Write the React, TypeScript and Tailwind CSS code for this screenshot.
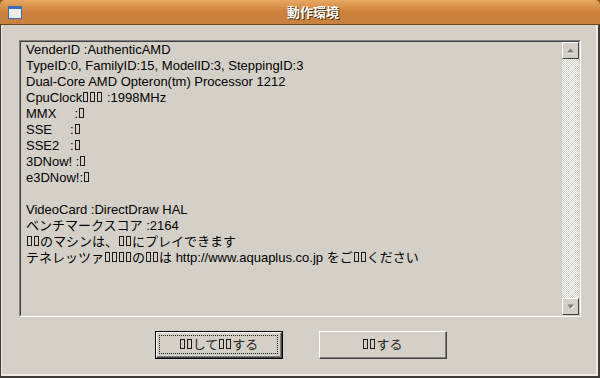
import React from 'react'

// missing-glyph box, as the original font renders it
function Tofu({ n = 1 }: { n?: number }) {
  return (
    <>
      {Array.from({ length: n }).map((_, i) => (
        <span key={i} className="inline-block w-[5px] h-[10px] border border-[#1a1a1a] ml-[1px] mr-[1px]" />
      ))}
    </>
  )
}

function ArrowBtn({ up }: { up?: boolean }) {
  return (
    <div className="w-[17px] h-[17px] bg-[#d4d0c8] border-t border-l border-white border-r border-b border-r-[#404040] border-b-[#404040] flex items-center justify-center">
      <svg width="9" height="6" viewBox="0 0 9 6">
        {up ? (
          <>
            <path d="M1 5 H8" stroke="#ffffff" strokeWidth="1" />
            <path d="M4.5 0.5 L8 4.5 H1 Z" fill="#808080" />
          </>
        ) : (
          <>
            <path d="M1.5 0.5 L8 0.5 L4.5 4.5 Z" fill="#808080" />
            <path d="M5 5 L8.5 1.5" stroke="#ffffff" strokeWidth="1" />
          </>
        )}
      </svg>
    </div>
  )
}

export default function App() {
  const font = "font-['Liberation_Sans','Noto_Sans_CJK_JP',sans-serif]"

  return (
    <div className={`w-[600px] h-[378px] bg-[#8a5a2c] ${font}`}>
      <div className="w-[600px] h-[378px] flex flex-col rounded-t-[5px] overflow-hidden">
        {/* title bar */}
        <div className="h-[25px] shrink-0 bg-linear-to-b from-[#e8a862] via-[#cb8039] to-[#c98241] border-b border-[#6a4418] flex items-center relative">
          <div className="absolute left-[8px] top-[6px] w-[14px] h-[13px] border border-[#3b6cc0] border-t-[3px] bg-[#ececec]" />
          <div className="flex-1 flex justify-center pl-[26px] pt-[1px]">
            <span className="text-white font-bold text-[13px] [text-shadow:1px_1px_0_#4a3010]">動作環境</span>
          </div>
        </div>

        {/* body */}
        <div className="flex-1 bg-[#d4d0c8] border-l border-[#3c3b37] border-r-2 border-b-2 border-r-[#3c3b37] border-b-[#3c3b37]">
          <div className="h-full border-l border-[#eeebe7] border-r-2 border-b-2 border-r-[#eeebe7] border-b-[#eeebe7] pt-[15px] pl-[17px]">
            <div className="w-[562px] h-[277px] border-t border-l border-[#808080] border-r border-b border-r-white border-b-white">
              <div className="h-full border-t border-l border-[#404040] border-r border-b border-r-[#d4d0c8] border-b-[#d4d0c8] flex">
                <div className="flex-1 pl-[5px] text-[13px] leading-[16px] text-black whitespace-pre">
                  <div>VenderID :AuthenticAMD</div>
                  <div>TypeID:0, FamilyID:15, ModelID:3, SteppingID:3</div>
                  <div>Dual-Core AMD Opteron(tm) Processor 1212</div>
                  <div>CpuClock<Tofu n={3} /> :1998MHz</div>
                  <div>MMX     :<Tofu /></div>
                  <div>SSE     :<Tofu /></div>
                  <div>SSE2   :<Tofu /></div>
                  <div>3DNow! :<Tofu /></div>
                  <div>e3DNow!:<Tofu /></div>
                  <div>&nbsp;</div>
                  <div>VideoCard :DirectDraw HAL</div>
                  <div>ベンチマークスコア :2164</div>
                  <div><Tofu n={2} />のマシンは、<Tofu n={2} />にプレイできます</div>
                  <div>テネレッツァ<Tofu n={4} />の<Tofu n={2} />は http://www.aquaplus.co.jp をご<Tofu n={2} />ください</div>
                </div>
                {/* scrollbar */}
                <div className="w-[17px] flex flex-col">
                  <ArrowBtn up />
                  <div className="flex-1 bg-[repeating-conic-gradient(#ffffff_0%_25%,#d4d0c8_0%_50%)] bg-size-[2px_2px]" />
                  <ArrowBtn />
                </div>
              </div>
            </div>

            {/* buttons */}
            <div className="flex mt-[14px] pl-[136px] gap-[36px] text-[13px] text-[#222]">
              <div className="w-[128px] h-[28px] border border-black">
                <div className="h-full border-t border-l border-white border-r border-b border-r-[#404040] border-b-[#404040]">
                  <div className="h-full border-r border-b border-[#808080] border-t-0 border-l-0 p-[2px]">
                    <div className="h-full border border-dotted border-[#222] flex items-center justify-center">
                      <span><Tofu n={2} />して<Tofu n={2} />する</span>
                    </div>
                  </div>
                </div>
              </div>
              <div className="w-[128px] h-[28px] border-t border-l border-white border-r border-b border-r-[#404040] border-b-[#404040]">
                <div className="h-full border-r border-b border-[#808080] border-t-0 border-l-0 flex items-center justify-center">
                  <span><Tofu n={2} />する</span>
                </div>
              </div>
            </div>
          </div>
        </div>
      </div>
    </div>
  )
}
